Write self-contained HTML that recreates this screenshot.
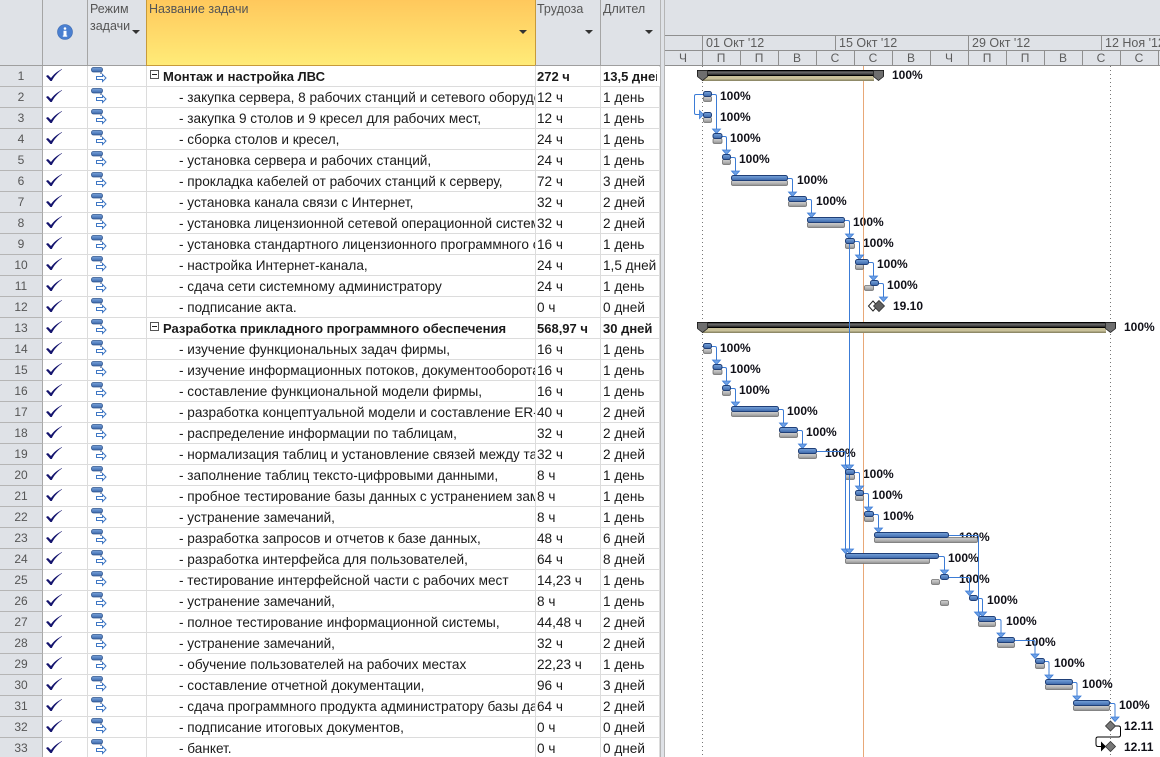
<!DOCTYPE html>
<html lang="ru"><head><meta charset="utf-8"><title>Gantt</title>
<style>
html,body{margin:0;padding:0;width:1160px;height:757px;overflow:hidden;background:#fff}
body{position:relative;font-family:"Liberation Sans","DejaVu Sans",sans-serif;font-size:13.6px;color:#1a1a1a}
.hd{position:absolute;top:0;height:65px;background:#dfe2e7;border-bottom:1px solid #9f9f9f;box-sizing:content-box;overflow:hidden;color:#555;font-size:12.5px;line-height:17px}
.hd span{position:absolute;left:3px;top:1px;white-space:nowrap}
.hd i{position:absolute;width:0;height:0;border-left:4px solid transparent;border-right:4px solid transparent;border-top:4px solid #333}
.vl{position:absolute;top:0;width:1px;height:65px;background:#a5a5a5}
table{position:absolute;left:0;top:66px;width:660px;border-collapse:separate;border-spacing:0;table-layout:fixed}
td{height:19px;padding:1px 0 0;border-bottom:1px solid #dcdcdc;border-right:1px solid #dcdcdc;white-space:nowrap;overflow:hidden;line-height:19px;vertical-align:middle}
td:nth-child(1){width:42px;background:#dfe2e7;border-right:1px solid #a8a8a8;border-bottom:1px solid #b5b5b5;text-align:center;color:#555;font-size:12px}
td:nth-child(2){width:44px}
td:nth-child(3){width:58px}
td:nth-child(4){padding-left:32px;box-sizing:content-box;width:356px}
td:nth-child(5){width:63px;padding-left:1px}
td:nth-child(6){width:56px;padding-left:2px}
tr.s td{font-weight:bold;font-size:13px}
tr.s td:nth-child(1){font-weight:normal;font-size:12px}
tr.s td:nth-child(4){padding-left:16px;width:372px}
td svg{display:block;margin-top:-1px}
#split{position:absolute;left:660px;top:0;width:5px;height:757px;background:#dfe2e7;border-left:1px solid #b5b5b5;border-right:1px solid #b5b5b5;box-sizing:border-box}
#chart{position:absolute;left:0;top:0}
</style></head><body>
<svg width="0" height="0" style="position:absolute"><defs>
<linearGradient id="gb" x1="0" y1="0" x2="0" y2="1"><stop offset="0" stop-color="#7aa3d8"/><stop offset=".5" stop-color="#5a86c5"/><stop offset="1" stop-color="#3d66a5"/></linearGradient>
<linearGradient id="gg" x1="0" y1="0" x2="0" y2="1"><stop offset="0" stop-color="#d0d0d0"/><stop offset=".5" stop-color="#b8b8b8"/><stop offset="1" stop-color="#8e8e8e"/></linearGradient>
<linearGradient id="gd" x1="0" y1="0" x2="0" y2="1"><stop offset="0" stop-color="#222"/><stop offset=".35" stop-color="#6a6a6a"/><stop offset=".7" stop-color="#444"/><stop offset="1" stop-color="#111"/></linearGradient>
<symbol id="c" viewBox="0 0 20 20" width="20" height="20"><path d="M3 10 L5 9 L8 12 C10.500 8.500 14 5.500 19 3 L19 3.500 C14.500 6.500 11 10.500 8.800 15 L7.400 15 Z" fill="#14146e"/></symbol>
<symbol id="m" viewBox="0 0 20 20" width="20" height="20"><rect x="1.500" y="1.500" width="11" height="4.500" rx="2" fill="url(#gb)" stroke="#30568f" stroke-width=".8"/><rect x="10" y="6" width="2" height="2" fill="#8a9ab5"/><path d="M6.500 10.500H12.500V8.500L16 12L12.500 15.500V13.500H6.500Z" fill="#fff" stroke="#3f77c4" stroke-width="1"/></symbol>
</defs></svg>

<div class="hd" style="left:0;width:660px"></div>
<div class="hd" style="left:665px;width:495px;height:35px;border-bottom:1px solid #9f9f9f"></div>
<div class="hd" style="left:146px;width:389px;background:linear-gradient(#ffc85c,#ffeb78);border-bottom:1px solid #c79a3a"><span>Название задачи</span><i style="left:373px;top:30px"></i></div>
<div class="hd" style="left:87px;width:59px;background:transparent;border:0"><span style="color:#555">Режим<br>задачи</span><i style="left:45px;top:30px"></i></div>
<div class="hd" style="left:535px;width:65px;background:transparent;border:0"><span style="left:2px">Трудоза</span><i style="left:50px;top:30px"></i></div>
<div class="hd" style="left:600px;width:60px;background:transparent;border:0"><span>Длител</span><i style="left:45px;top:30px"></i></div>
<div class="vl" style="left:42px"></div><div class="vl" style="left:87px"></div><div class="vl" style="left:146px;background:#c79a3a"></div><div class="vl" style="left:535px;background:#c79a3a"></div><div class="vl" style="left:600px"></div>
<svg style="position:absolute;left:57px;top:24px" width="16" height="16"><circle cx="8" cy="8" r="7.500" fill="#4a7fd0" stroke="#3a68b0" stroke-width=".6"/><circle cx="8" cy="4.500" r="1.300" fill="#fff"/><rect x="6.500" y="6.800" width="3" height="5.500" fill="#fff"/><rect x="5.800" y="11.500" width="4.400" height="1.200" fill="#fff"/></svg>

<table>
<tr class="s"><td>1</td><td><svg width="20" height="20"><use href="#c"/></svg></td><td><svg width="24" height="20" style="margin-left:2px"><use href="#m"/></svg></td><td>Монтаж и настройка ЛВС</td><td>272 ч</td><td>13,5 дней</td></tr>
<tr><td>2</td><td><svg width="20" height="20"><use href="#c"/></svg></td><td><svg width="24" height="20" style="margin-left:2px"><use href="#m"/></svg></td><td>- закупка сервера, 8 рабочих станций и сетевого оборудования,</td><td>12 ч</td><td>1 день</td></tr>
<tr><td>3</td><td><svg width="20" height="20"><use href="#c"/></svg></td><td><svg width="24" height="20" style="margin-left:2px"><use href="#m"/></svg></td><td>- закупка 9 столов и 9 кресел для рабочих мест,</td><td>12 ч</td><td>1 день</td></tr>
<tr><td>4</td><td><svg width="20" height="20"><use href="#c"/></svg></td><td><svg width="24" height="20" style="margin-left:2px"><use href="#m"/></svg></td><td>- сборка столов и кресел,</td><td>24 ч</td><td>1 день</td></tr>
<tr><td>5</td><td><svg width="20" height="20"><use href="#c"/></svg></td><td><svg width="24" height="20" style="margin-left:2px"><use href="#m"/></svg></td><td>- установка сервера и рабочих станций,</td><td>24 ч</td><td>1 день</td></tr>
<tr><td>6</td><td><svg width="20" height="20"><use href="#c"/></svg></td><td><svg width="24" height="20" style="margin-left:2px"><use href="#m"/></svg></td><td>- прокладка кабелей от рабочих станций к серверу,</td><td>72 ч</td><td>3 дней</td></tr>
<tr><td>7</td><td><svg width="20" height="20"><use href="#c"/></svg></td><td><svg width="24" height="20" style="margin-left:2px"><use href="#m"/></svg></td><td>- установка канала связи с Интернет,</td><td>32 ч</td><td>2 дней</td></tr>
<tr><td>8</td><td><svg width="20" height="20"><use href="#c"/></svg></td><td><svg width="24" height="20" style="margin-left:2px"><use href="#m"/></svg></td><td>- установка лицензионной сетевой операционной системы,</td><td>32 ч</td><td>2 дней</td></tr>
<tr><td>9</td><td><svg width="20" height="20"><use href="#c"/></svg></td><td><svg width="24" height="20" style="margin-left:2px"><use href="#m"/></svg></td><td>- установка стандартного лицензионного программного обеспечения,</td><td>16 ч</td><td>1 день</td></tr>
<tr><td>10</td><td><svg width="20" height="20"><use href="#c"/></svg></td><td><svg width="24" height="20" style="margin-left:2px"><use href="#m"/></svg></td><td>- настройка Интернет-канала,</td><td>24 ч</td><td>1,5 дней</td></tr>
<tr><td>11</td><td><svg width="20" height="20"><use href="#c"/></svg></td><td><svg width="24" height="20" style="margin-left:2px"><use href="#m"/></svg></td><td>- сдача сети системному администратору</td><td>24 ч</td><td>1 день</td></tr>
<tr><td>12</td><td><svg width="20" height="20"><use href="#c"/></svg></td><td><svg width="24" height="20" style="margin-left:2px"><use href="#m"/></svg></td><td>- подписание акта.</td><td>0 ч</td><td>0 дней</td></tr>
<tr class="s"><td>13</td><td><svg width="20" height="20"><use href="#c"/></svg></td><td><svg width="24" height="20" style="margin-left:2px"><use href="#m"/></svg></td><td>Разработка прикладного программного обеспечения</td><td>568,97 ч</td><td>30 дней</td></tr>
<tr><td>14</td><td><svg width="20" height="20"><use href="#c"/></svg></td><td><svg width="24" height="20" style="margin-left:2px"><use href="#m"/></svg></td><td>- изучение функциональных задач фирмы,</td><td>16 ч</td><td>1 день</td></tr>
<tr><td>15</td><td><svg width="20" height="20"><use href="#c"/></svg></td><td><svg width="24" height="20" style="margin-left:2px"><use href="#m"/></svg></td><td>- изучение информационных потоков, документооборота,</td><td>16 ч</td><td>1 день</td></tr>
<tr><td>16</td><td><svg width="20" height="20"><use href="#c"/></svg></td><td><svg width="24" height="20" style="margin-left:2px"><use href="#m"/></svg></td><td>- составление функциональной модели фирмы,</td><td>16 ч</td><td>1 день</td></tr>
<tr><td>17</td><td><svg width="20" height="20"><use href="#c"/></svg></td><td><svg width="24" height="20" style="margin-left:2px"><use href="#m"/></svg></td><td>- разработка концептуальной модели и составление ER-диаграммы,</td><td>40 ч</td><td>2 дней</td></tr>
<tr><td>18</td><td><svg width="20" height="20"><use href="#c"/></svg></td><td><svg width="24" height="20" style="margin-left:2px"><use href="#m"/></svg></td><td>- распределение информации по таблицам,</td><td>32 ч</td><td>2 дней</td></tr>
<tr><td>19</td><td><svg width="20" height="20"><use href="#c"/></svg></td><td><svg width="24" height="20" style="margin-left:2px"><use href="#m"/></svg></td><td>- нормализация таблиц и установление связей между таблицами,</td><td>32 ч</td><td>2 дней</td></tr>
<tr><td>20</td><td><svg width="20" height="20"><use href="#c"/></svg></td><td><svg width="24" height="20" style="margin-left:2px"><use href="#m"/></svg></td><td>- заполнение таблиц тексто-цифровыми данными,</td><td>8 ч</td><td>1 день</td></tr>
<tr><td>21</td><td><svg width="20" height="20"><use href="#c"/></svg></td><td><svg width="24" height="20" style="margin-left:2px"><use href="#m"/></svg></td><td>- пробное тестирование базы данных с устранением замечаний,</td><td>8 ч</td><td>1 день</td></tr>
<tr><td>22</td><td><svg width="20" height="20"><use href="#c"/></svg></td><td><svg width="24" height="20" style="margin-left:2px"><use href="#m"/></svg></td><td>- устранение замечаний,</td><td>8 ч</td><td>1 день</td></tr>
<tr><td>23</td><td><svg width="20" height="20"><use href="#c"/></svg></td><td><svg width="24" height="20" style="margin-left:2px"><use href="#m"/></svg></td><td>- разработка запросов и отчетов к базе данных,</td><td>48 ч</td><td>6 дней</td></tr>
<tr><td>24</td><td><svg width="20" height="20"><use href="#c"/></svg></td><td><svg width="24" height="20" style="margin-left:2px"><use href="#m"/></svg></td><td>- разработка интерфейса для пользователей,</td><td>64 ч</td><td>8 дней</td></tr>
<tr><td>25</td><td><svg width="20" height="20"><use href="#c"/></svg></td><td><svg width="24" height="20" style="margin-left:2px"><use href="#m"/></svg></td><td>- тестирование интерфейсной части с рабочих мест</td><td>14,23 ч</td><td>1 день</td></tr>
<tr><td>26</td><td><svg width="20" height="20"><use href="#c"/></svg></td><td><svg width="24" height="20" style="margin-left:2px"><use href="#m"/></svg></td><td>- устранение замечаний,</td><td>8 ч</td><td>1 день</td></tr>
<tr><td>27</td><td><svg width="20" height="20"><use href="#c"/></svg></td><td><svg width="24" height="20" style="margin-left:2px"><use href="#m"/></svg></td><td>- полное тестирование информационной системы,</td><td>44,48 ч</td><td>2 дней</td></tr>
<tr><td>28</td><td><svg width="20" height="20"><use href="#c"/></svg></td><td><svg width="24" height="20" style="margin-left:2px"><use href="#m"/></svg></td><td>- устранение замечаний,</td><td>32 ч</td><td>2 дней</td></tr>
<tr><td>29</td><td><svg width="20" height="20"><use href="#c"/></svg></td><td><svg width="24" height="20" style="margin-left:2px"><use href="#m"/></svg></td><td>- обучение пользователей на рабочих местах</td><td>22,23 ч</td><td>1 день</td></tr>
<tr><td>30</td><td><svg width="20" height="20"><use href="#c"/></svg></td><td><svg width="24" height="20" style="margin-left:2px"><use href="#m"/></svg></td><td>- составление отчетной документации,</td><td>96 ч</td><td>3 дней</td></tr>
<tr><td>31</td><td><svg width="20" height="20"><use href="#c"/></svg></td><td><svg width="24" height="20" style="margin-left:2px"><use href="#m"/></svg></td><td>- сдача программного продукта администратору базы данных,</td><td>64 ч</td><td>2 дней</td></tr>
<tr><td>32</td><td><svg width="20" height="20"><use href="#c"/></svg></td><td><svg width="24" height="20" style="margin-left:2px"><use href="#m"/></svg></td><td>- подписание итоговых документов,</td><td>0 ч</td><td>0 дней</td></tr>
<tr><td>33</td><td><svg width="20" height="20"><use href="#c"/></svg></td><td><svg width="24" height="20" style="margin-left:2px"><use href="#m"/></svg></td><td>- банкет.</td><td>0 ч</td><td>0 дней</td></tr>
</table>
<div style="position:absolute;left:657px;top:67px;width:3px;height:19px;background:#fff"></div>
<svg style="position:absolute;left:150px;top:70px" width="9" height="9"><rect x=".5" y=".5" width="8" height="8" fill="#fff" stroke="#555"/><path d="M2 4.500H7" stroke="#222"/></svg>
<svg style="position:absolute;left:150px;top:322px" width="9" height="9"><rect x=".5" y=".5" width="8" height="8" fill="#fff" stroke="#555"/><path d="M2 4.500H7" stroke="#222"/></svg>
<div id="split"></div>

<svg id="chart" width="1160" height="757" style="pointer-events:none">
<!-- timescale -->
<rect x="665" y="35" width="495" height="30" fill="#dfe2e7"/>
<path d="M665 35.500H1160M665 50.500H1160M665 65.500H1160" stroke="#8f8f8f"/>
<path d="M702.500 35V65M835.500 35V50M968.500 35V65M1101.500 35V50M740.500 50V65M778.500 50V65M816.500 50V65M854.500 50V65M892.500 50V65M930.500 50V65M1006.500 50V65M1044.500 50V65M1082.500 50V65M1120.500 50V65M1158.500 50V65" stroke="#8f8f8f"/>
<g font-size="12.500" fill="#5c5c5c" font-family="Liberation Sans, sans-serif">
<text x="706" y="47">01 Окт '12</text><text x="839" y="47">15 Окт '12</text><text x="972" y="47">29 Окт '12</text><text x="1105" y="47">12 Ноя '12</text>
</g>
<g font-size="12" fill="#5c5c5c" font-family="Liberation Sans, sans-serif" text-anchor="middle">
<text x="683" y="62">Ч</text><text x="721" y="62">П</text><text x="759" y="62">П</text><text x="797" y="62">В</text><text x="835" y="62">С</text><text x="873" y="62">С</text><text x="911" y="62">В</text><text x="949" y="62">Ч</text><text x="987" y="62">П</text><text x="1025" y="62">П</text><text x="1063" y="62">В</text><text x="1101" y="62">С</text><text x="1139" y="62">С</text>
</g>
<!-- vertical markers -->
<path d="M702.500 66V757M1110.500 66V757" stroke="#777" stroke-dasharray="1 3"/>
<!-- labels sit beneath link lines -->
<g font-size="12" font-weight="bold" fill="#101018" font-family="Liberation Sans, sans-serif">
<text x="892" y="79">100%</text><text x="720" y="100">100%</text><text x="720" y="121">100%</text><text x="730" y="142">100%</text><text x="739" y="163">100%</text><text x="797" y="184">100%</text><text x="816" y="205">100%</text><text x="853" y="226">100%</text><text x="863" y="247">100%</text><text x="877" y="268">100%</text><text x="887" y="289">100%</text><text x="893" y="310">19.10</text>
<text x="1124" y="331">100%</text><text x="720" y="352">100%</text><text x="730" y="373">100%</text><text x="739" y="394">100%</text><text x="787" y="415">100%</text><text x="806" y="436">100%</text><text x="825" y="457">100%</text><text x="863" y="478">100%</text><text x="872" y="499">100%</text><text x="883" y="520">100%</text><text x="959" y="541">100%</text><text x="948" y="562">100%</text><text x="959" y="583">100%</text><text x="987" y="604">100%</text><text x="1006" y="625">100%</text><text x="1025" y="646">100%</text><text x="1054" y="667">100%</text><text x="1082" y="688">100%</text><text x="1119" y="709">100%</text><text x="1124" y="730">12.11</text><text x="1124" y="751">12.11</text>
</g>
<path d="M863.500 66V757" stroke="#e8a878"/>
<!-- summary bars -->
<g>
<rect x="702" y="76" width="172" height="5" fill="#c9c19a"/><rect x="702" y="79.500" width="172" height="1.500" fill="#8f8a68"/>
<rect x="697.500" y="70.500" width="186" height="5" fill="url(#gd)" stroke="#000" stroke-width="1"/>
<path d="M697.500 70.500H707.500V76.500L702.500 80.500L697.500 76.500ZM873.500 70.500H883.500V76.500L878.500 80.500L873.500 76.500Z" fill="#6e6e6e" stroke="#222" stroke-width=".8"/>
<rect x="702" y="328" width="404" height="5" fill="#c9c19a"/><rect x="702" y="331.500" width="404" height="1.500" fill="#8f8a68"/>
<rect x="697.500" y="322.500" width="418" height="5" fill="url(#gd)" stroke="#000" stroke-width="1"/>
<path d="M697.500 322.500H707.500V328.500L702.500 332.500L697.500 328.500ZM1105.500 322.500H1115.500V328.500L1110.500 332.500L1105.500 328.500Z" fill="#6e6e6e" stroke="#222" stroke-width=".8"/>
</g>
<!-- baseline (gray) bars -->
<g fill="url(#gg)" stroke="#6f6f6f" stroke-width=".8">
<rect x="703.500" y="96.500" width="8" height="5" rx="1.500"/><rect x="703.500" y="117.500" width="8" height="5" rx="1.500"/><rect x="713" y="138.500" width="9" height="5" rx="1.500"/><rect x="722.500" y="159.500" width="8" height="5" rx="1.500"/><rect x="731.500" y="180.500" width="56" height="5" rx="1.500"/><rect x="788.500" y="201.500" width="18" height="5" rx="1.500"/><rect x="807.500" y="222.500" width="37" height="5" rx="1.500"/><rect x="845.500" y="243.500" width="9" height="5" rx="1.500"/><rect x="855.500" y="264.500" width="8" height="5" rx="1.500"/><rect x="864.500" y="285.500" width="9" height="5" rx="1.500"/>
<rect x="703.500" y="348.500" width="8" height="5" rx="1.500"/><rect x="713" y="369.500" width="9" height="5" rx="1.500"/><rect x="722.500" y="390.500" width="8" height="5" rx="1.500"/><rect x="731.500" y="411.500" width="47" height="5" rx="1.500"/><rect x="779.500" y="432.500" width="18" height="5" rx="1.500"/><rect x="798.500" y="453.500" width="18" height="5" rx="1.500"/><rect x="845.500" y="474.500" width="9" height="5" rx="1.500"/><rect x="855.500" y="495.500" width="8" height="5" rx="1.500"/><rect x="864.500" y="516.500" width="9" height="5" rx="1.500"/><rect x="874.500" y="537.500" width="103" height="5" rx="1.500"/><rect x="845.500" y="558.500" width="84" height="5" rx="1.500"/><rect x="931.500" y="579.500" width="8" height="5" rx="1.500"/><rect x="940.500" y="600.500" width="8" height="5" rx="1.500"/><rect x="978.500" y="621.500" width="17" height="5" rx="1.500"/><rect x="997.500" y="642.500" width="17" height="5" rx="1.500"/><rect x="1035.500" y="663.500" width="9" height="5" rx="1.500"/><rect x="1045.500" y="684.500" width="27" height="5" rx="1.500"/><rect x="1073.500" y="705.500" width="36" height="5" rx="1.500"/>
</g>
<!-- links -->
<g fill="none" stroke="#3c7cd6" stroke-width="1">
<path d="M703 94.500H696Q694.500 94.500 694.500 96V113Q694.500 114.500 696 114.500H700"/>
<path d="M712 94.500H715Q716.500 94.500 716.500 96V129"/>
<path d="M722 136.500H725Q726.500 136.500 726.500 138V150"/>
<path d="M731 157.500H734Q735.500 157.500 735.500 159V171"/>
<path d="M788 178.500H791Q792.500 178.500 792.500 180V192"/>
<path d="M807 199.500H810Q811.500 199.500 811.500 201V213"/>
<path d="M845 220.500H848Q849.500 220.500 849.500 222V549"/>
<path d="M855 241.500H858Q859.500 241.500 859.500 243V255"/>
<path d="M869 262.500H872Q873.500 262.500 873.500 264V276"/>
<path d="M879 283.500H882Q883.500 283.500 883.500 285V297"/>
<path d="M712 346.500H715Q716.500 346.500 716.500 348V360"/>
<path d="M722 367.500H725Q726.500 367.500 726.500 369V381"/>
<path d="M731 388.500H734Q735.500 388.500 735.500 390V402"/>
<path d="M779 409.500H782Q783.500 409.500 783.500 411V423"/>
<path d="M798 430.500H801Q802.500 430.500 802.500 432V444"/>
<path d="M817 451.500H844Q845.500 451.500 845.500 453V549"/>
<path d="M855 472.500H858Q859.500 472.500 859.500 474V486"/>
<path d="M863 493.500H867Q868.500 493.500 868.500 495V507"/>
<path d="M874 514.500H877Q878.500 514.500 878.500 516V528"/>
<path d="M949 535.500H977Q978.500 535.500 978.500 537V612"/>
<path d="M939 556.500H943Q944.500 556.500 944.500 558V570"/>
<path d="M949 577.500H968Q969.500 577.500 969.500 579V591"/>
<path d="M978 598.500H981Q982.500 598.500 982.500 600V612"/>
<path d="M996 619.500H999.500Q1001 619.500 1001 621V633"/>
<path d="M1015 640.500H1033.500Q1035 640.500 1035 642V654"/>
<path d="M1045 661.500H1047.500Q1049 661.500 1049 663V675"/>
<path d="M1073 682.500H1075.500Q1077 682.500 1077 684V696"/>
<path d="M1110 703.500H1113.500Q1115 703.500 1115 705V717"/>
</g>
<g fill="#6ea0e4" stroke="#3c7cd6" stroke-width=".8">
<path d="M699.500 110.500L703.500 114.500L699.500 118.500Z"/>
<path d="M712.500 129H720.500L716.500 133.500Z"/><path d="M722.500 150H730.500L726.500 154.500Z"/><path d="M731.500 171H739.500L735.500 175.500Z"/><path d="M788.500 192H796.500L792.500 196.500Z"/><path d="M807.500 213H815.500L811.500 217.500Z"/><path d="M845.500 234H853.500L849.500 238.500Z"/><path d="M855.500 255H863.500L859.500 259.500Z"/><path d="M869.500 276H877.500L873.500 280.500Z"/><path d="M879.500 297H887.500L883.500 301.500Z"/>
<path d="M712.500 360H720.500L716.500 364.500Z"/><path d="M722.500 381H730.500L726.500 385.500Z"/><path d="M731.500 402H739.500L735.500 406.500Z"/><path d="M779.500 423H787.500L783.500 427.500Z"/><path d="M798.500 444H806.500L802.500 448.500Z"/>
<path d="M841.500 465H849.500L845.500 469.500Z"/><path d="M845.500 465H853.500L849.500 469.500Z"/><path d="M855.500 486H863.500L859.500 490.500Z"/><path d="M864.500 507H872.500L868.500 511.500Z"/><path d="M874.500 528H882.500L878.500 532.500Z"/>
<path d="M841.500 549H849.500L845.500 553.500Z"/><path d="M845.500 549H853.500L849.500 553.500Z"/><path d="M940.500 570H948.500L944.500 574.500Z"/><path d="M965.500 591H973.500L969.500 595.500Z"/>
<path d="M974.500 612H982.500L978.500 616.500Z"/><path d="M978.500 612H986.500L982.500 616.500Z"/><path d="M997 633H1005L1001 637.500Z"/><path d="M1031 654H1039L1035 658.500Z"/><path d="M1045 675H1053L1049 679.500Z"/><path d="M1073 696H1081L1077 700.500Z"/><path d="M1111 717H1119L1115 721.500Z"/>
</g>
<!-- actual (blue) bars -->
<g fill="url(#gb)" stroke="#1f3f78" stroke-width="1">
<rect x="703.500" y="91.500" width="8" height="5" rx="2"/><rect x="703.500" y="112.500" width="8" height="5" rx="2"/><rect x="713" y="133.500" width="9" height="5" rx="2"/><rect x="722.500" y="154.500" width="8" height="5" rx="2"/><rect x="731.500" y="175.500" width="56" height="5" rx="2"/><rect x="788.500" y="196.500" width="18" height="5" rx="2"/><rect x="807.500" y="217.500" width="37" height="5" rx="2"/><rect x="845.500" y="238.500" width="9" height="5" rx="2"/><rect x="855.500" y="259.500" width="13" height="5" rx="2"/><rect x="870.500" y="280.500" width="8" height="5" rx="2"/>
<rect x="703.500" y="343.500" width="8" height="5" rx="2"/><rect x="713" y="364.500" width="9" height="5" rx="2"/><rect x="722.500" y="385.500" width="8" height="5" rx="2"/><rect x="731.500" y="406.500" width="47" height="5" rx="2"/><rect x="779.500" y="427.500" width="18" height="5" rx="2"/><rect x="798.500" y="448.500" width="18" height="5" rx="2"/><rect x="845.500" y="469.500" width="9" height="5" rx="2"/><rect x="855.500" y="490.500" width="8" height="5" rx="2"/><rect x="864.500" y="511.500" width="9" height="5" rx="2"/><rect x="874.500" y="532.500" width="74" height="5" rx="2"/><rect x="845.500" y="553.500" width="93" height="5" rx="2"/><rect x="940.500" y="574.500" width="8" height="5" rx="2"/><rect x="969.500" y="595.500" width="8" height="5" rx="2"/><rect x="978.500" y="616.500" width="17" height="5" rx="2"/><rect x="997.500" y="637.500" width="17" height="5" rx="2"/><rect x="1035.500" y="658.500" width="9" height="5" rx="2"/><rect x="1045.500" y="679.500" width="27" height="5" rx="2"/><rect x="1073.500" y="700.500" width="36" height="5" rx="2"/>
</g>
<!-- milestones -->
<path d="M873 301L877.500 306L873 311L868.500 306Z" fill="#fff" stroke="#222"/>
<path d="M879 300.500L884.500 306L879 311.500L873.500 306Z" fill="#606060" stroke="#333" stroke-width=".8"/>
<path d="M1110.500 721L1115.500 726L1110.500 731L1105.500 726Z" fill="#777" stroke="#333" stroke-width=".8"/>
<path d="M1115.500 726H1118.500Q1120.500 726 1120.500 728V735Q1120.500 737 1118.500 737H1098Q1096 737 1096 739V744Q1096 746.500 1098 746.500H1101" fill="none" stroke="#000"/>
<path d="M1101 741.500L1106 746.500L1101 751.500Z" fill="#000"/>
<path d="M1110.500 741.500L1115.500 746.500L1110.500 751.500L1105.500 746.500Z" fill="#777" stroke="#333" stroke-width=".8"/>
</svg>
</body></html>
